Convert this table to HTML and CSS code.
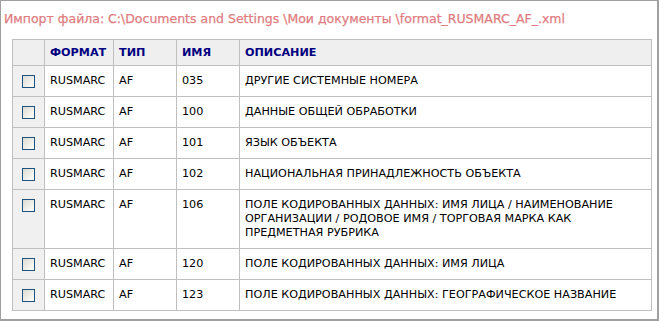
FILE: index.html
```html
<!DOCTYPE html>
<html lang="ru">
<head>
    <meta charset="UTF-8">
    <meta name="viewport" content="width=device-width, initial-scale=1.0">
    <title>Импорт файла</title>
    <link rel="stylesheet" href="styles.css">
</head>
<body>
    <div class="frame">
        <div class="import-path">Импорт файла: C:\Documents and Settings \Мои документы \format_RUSMARC_AF_.xml</div>

        <table class="fields">
            <colgroup>
                <col class="col-check">
                <col class="col-format">
                <col class="col-type">
                <col class="col-name">
                <col class="col-desc">
            </colgroup>
            <thead>
                <tr>
                    <th class="check"></th>
                    <th>ФОРМАТ</th>
                    <th>ТИП</th>
                    <th>ИМЯ</th>
                    <th>ОПИСАНИЕ</th>
                </tr>
            </thead>
            <tbody>
                <tr>
                    <td class="check"><span class="checkbox"></span></td>
                    <td>RUSMARC</td>
                    <td>AF</td>
                    <td>035</td>
                    <td>ДРУГИЕ СИСТЕМНЫЕ НОМЕРА</td>
                </tr>
                <tr>
                    <td class="check"><span class="checkbox"></span></td>
                    <td>RUSMARC</td>
                    <td>AF</td>
                    <td>100</td>
                    <td>ДАННЫЕ ОБЩЕЙ ОБРАБОТКИ</td>
                </tr>
                <tr>
                    <td class="check"><span class="checkbox"></span></td>
                    <td>RUSMARC</td>
                    <td>AF</td>
                    <td>101</td>
                    <td>ЯЗЫК ОБЪЕКТА</td>
                </tr>
                <tr>
                    <td class="check"><span class="checkbox"></span></td>
                    <td>RUSMARC</td>
                    <td>AF</td>
                    <td>102</td>
                    <td>НАЦИОНАЛЬНАЯ ПРИНАДЛЕЖНОСТЬ ОБЪЕКТА</td>
                </tr>
                <tr>
                    <td class="check"><span class="checkbox"></span></td>
                    <td>RUSMARC</td>
                    <td>AF</td>
                    <td>106</td>
                    <td>ПОЛЕ КОДИРОВАННЫХ ДАННЫХ: ИМЯ ЛИЦА / НАИМЕНОВАНИЕ<br>ОРГАНИЗАЦИИ / РОДОВОЕ ИМЯ / ТОРГОВАЯ МАРКА КАК<br>ПРЕДМЕТНАЯ РУБРИКА</td>
                </tr>
                <tr>
                    <td class="check"><span class="checkbox"></span></td>
                    <td>RUSMARC</td>
                    <td>AF</td>
                    <td>120</td>
                    <td>ПОЛЕ КОДИРОВАННЫХ ДАННЫХ: ИМЯ ЛИЦА</td>
                </tr>
                <tr>
                    <td class="check"><span class="checkbox"></span></td>
                    <td>RUSMARC</td>
                    <td>AF</td>
                    <td>123</td>
                    <td>ПОЛЕ КОДИРОВАННЫХ ДАННЫХ: ГЕОГРАФИЧЕСКОЕ НАЗВАНИЕ</td>
                </tr>
            </tbody>
        </table>
    </div>
</body>
</html>
```

FILE: styles.css
```css
* {
    box-sizing: border-box;
}
body {
    margin: 0;
    background-color: #ffffff;
    font-family: "DejaVu Sans", Verdana, sans-serif;
}
.frame {
    width: 659px;
    height: 321px;
    border: 1px solid #a0a0a0;
    border-right-width: 2px;
    border-bottom-width: 2px;
    padding: 10px 0 0 11px;
}
.import-path {
    height: 28px;
    margin-left: -8px;
    font-size: 12.5px;
    line-height: 16px;
    color: #e07c80;
    -webkit-text-stroke: 0.25px #e07c80;
}
.fields {
    width: 640px;
    border-collapse: collapse;
    table-layout: fixed;
    border: 1px solid #c0c0c0;
    font-size: 11.2px;
    line-height: 14px;
    color: #000000;
}
.col-check { width: 32px; }
.col-format { width: 69px; }
.col-type { width: 63px; }
.col-name { width: 63px; }
.fields th,
.fields td {
    border: 1px solid #c0c0c0;
    padding: 8px 4px 8px 5px;
    text-align: left;
    vertical-align: top;
}
.fields th {
    height: 26px;
    padding-top: 6px;
    padding-bottom: 5px;
    background-color: #efefef;
    color: #000080;
    font-weight: bold;
}
.fields td.check {
    padding: 9px 0 0 9px;
    background-color: #f0f0f0;
}
.checkbox {
    display: block;
    width: 13px;
    height: 13px;
    border: 1px solid #1c5180;
    background: linear-gradient(135deg, #dcdcd4 0%, #f4f4f0 70%, #ffffff 100%);
}
```
